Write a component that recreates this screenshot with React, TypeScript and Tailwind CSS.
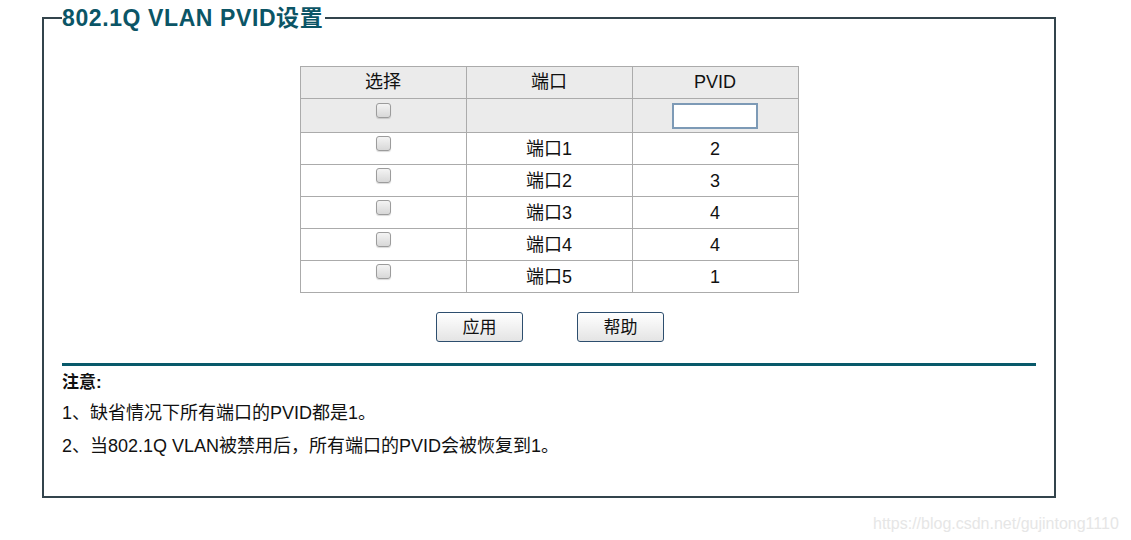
const font = "font-['Liberation_Sans','Noto_Sans_CJK_SC',sans-serif]";

const rows = [
  { port: "端口1", pvid: "2" },
  { port: "端口2", pvid: "3" },
  { port: "端口3", pvid: "4" },
  { port: "端口4", pvid: "4" },
  { port: "端口5", pvid: "1" },
];

// Grey rounded checkbox, as the old IE-style control looks
const Box = () => (
  <div className="flex justify-center">
    <span className="block w-[15px] h-[15px] rounded-[3px] border border-[#9c9c9c] bg-gradient-to-b from-[#f4f4f4] to-[#d8d8d8] shadow-[0_1px_1px_rgba(0,0,0,0.15)]" />
  </div>
);

const Btn = ({ label }: { label: string }) => (
  <button className="w-[87px] h-[30px] rounded-[3px] border border-[#2d4e6e] bg-gradient-to-b from-[#ffffff] to-[#e4e4e4] text-[17px] text-[#111] leading-none">
    {label}
  </button>
);

export default function App() {
  return (
    <div className={`${font} w-[1131px] h-[540px] bg-white relative overflow-hidden`}>
      <fieldset className="ml-[42px] mt-[5px] w-[1014px] h-[493px] border-2 border-[#33444c] px-[18px]">
        <legend className="text-[23px] font-bold tracking-[0.6px] text-[#0b5566] leading-[26px] pr-[2px]">
          802.1Q VLAN PVID设置
        </legend>

        <div className="flex justify-center pt-[35px]">
          <table className="w-[499px] border-collapse text-[18px] text-[#111]">
            <thead>
              <tr className="bg-[#ebebeb] h-[32px]">
                <th className="w-[166px] border border-[#ababab] font-normal">选择</th>
                <th className="w-[166px] border border-[#ababab] font-normal">端口</th>
                <th className="w-[166px] border border-[#ababab] font-normal">PVID</th>
              </tr>
            </thead>
            <tbody>
              <tr className="bg-[#ebebeb] h-[34px]">
                <td className="border border-[#ababab] align-top pt-[4px]">
                  <Box />
                </td>
                <td className="border border-[#ababab]"></td>
                <td className="border border-[#ababab] text-center">
                  <input className="w-[86px] h-[26px] border-2 border-[#7d9ab6] bg-white outline-none align-middle" />
                </td>
              </tr>
              {rows.map((r) => (
                <tr key={r.port} className="h-[32px]">
                  <td className="border border-[#ababab] align-top pt-[3px]">
                    <Box />
                  </td>
                  <td className="border border-[#ababab] text-center leading-[22px] pt-[1px]">{r.port}</td>
                  <td className="border border-[#ababab] text-center leading-[22px] pt-[1px]">{r.pvid}</td>
                </tr>
              ))}
            </tbody>
          </table>
        </div>

        <div className="flex justify-center gap-[54px] mt-[19px] pl-[2px]">
          <Btn label="应用" />
          <Btn label="帮助" />
        </div>

        <div className="mt-[21px] h-[3px] bg-[#08596a]" />
        <div className="text-[18px] text-[#111] pt-[6px]">
          <div className="font-bold text-[17px] leading-[22px]">注意:</div>
          <div className="leading-[22px] mt-[8px]">1、缺省情况下所有端口的PVID都是1。</div>
          <div className="leading-[22px] mt-[11px]">2、当802.1Q VLAN被禁用后，所有端口的PVID会被恢复到1。</div>
        </div>
      </fieldset>

      <div className="absolute left-[873px] top-[512px] text-[16px] text-[#e6e6e6]">
        https://blog.csdn.net/gujintong1110
      </div>
    </div>
  );
}
